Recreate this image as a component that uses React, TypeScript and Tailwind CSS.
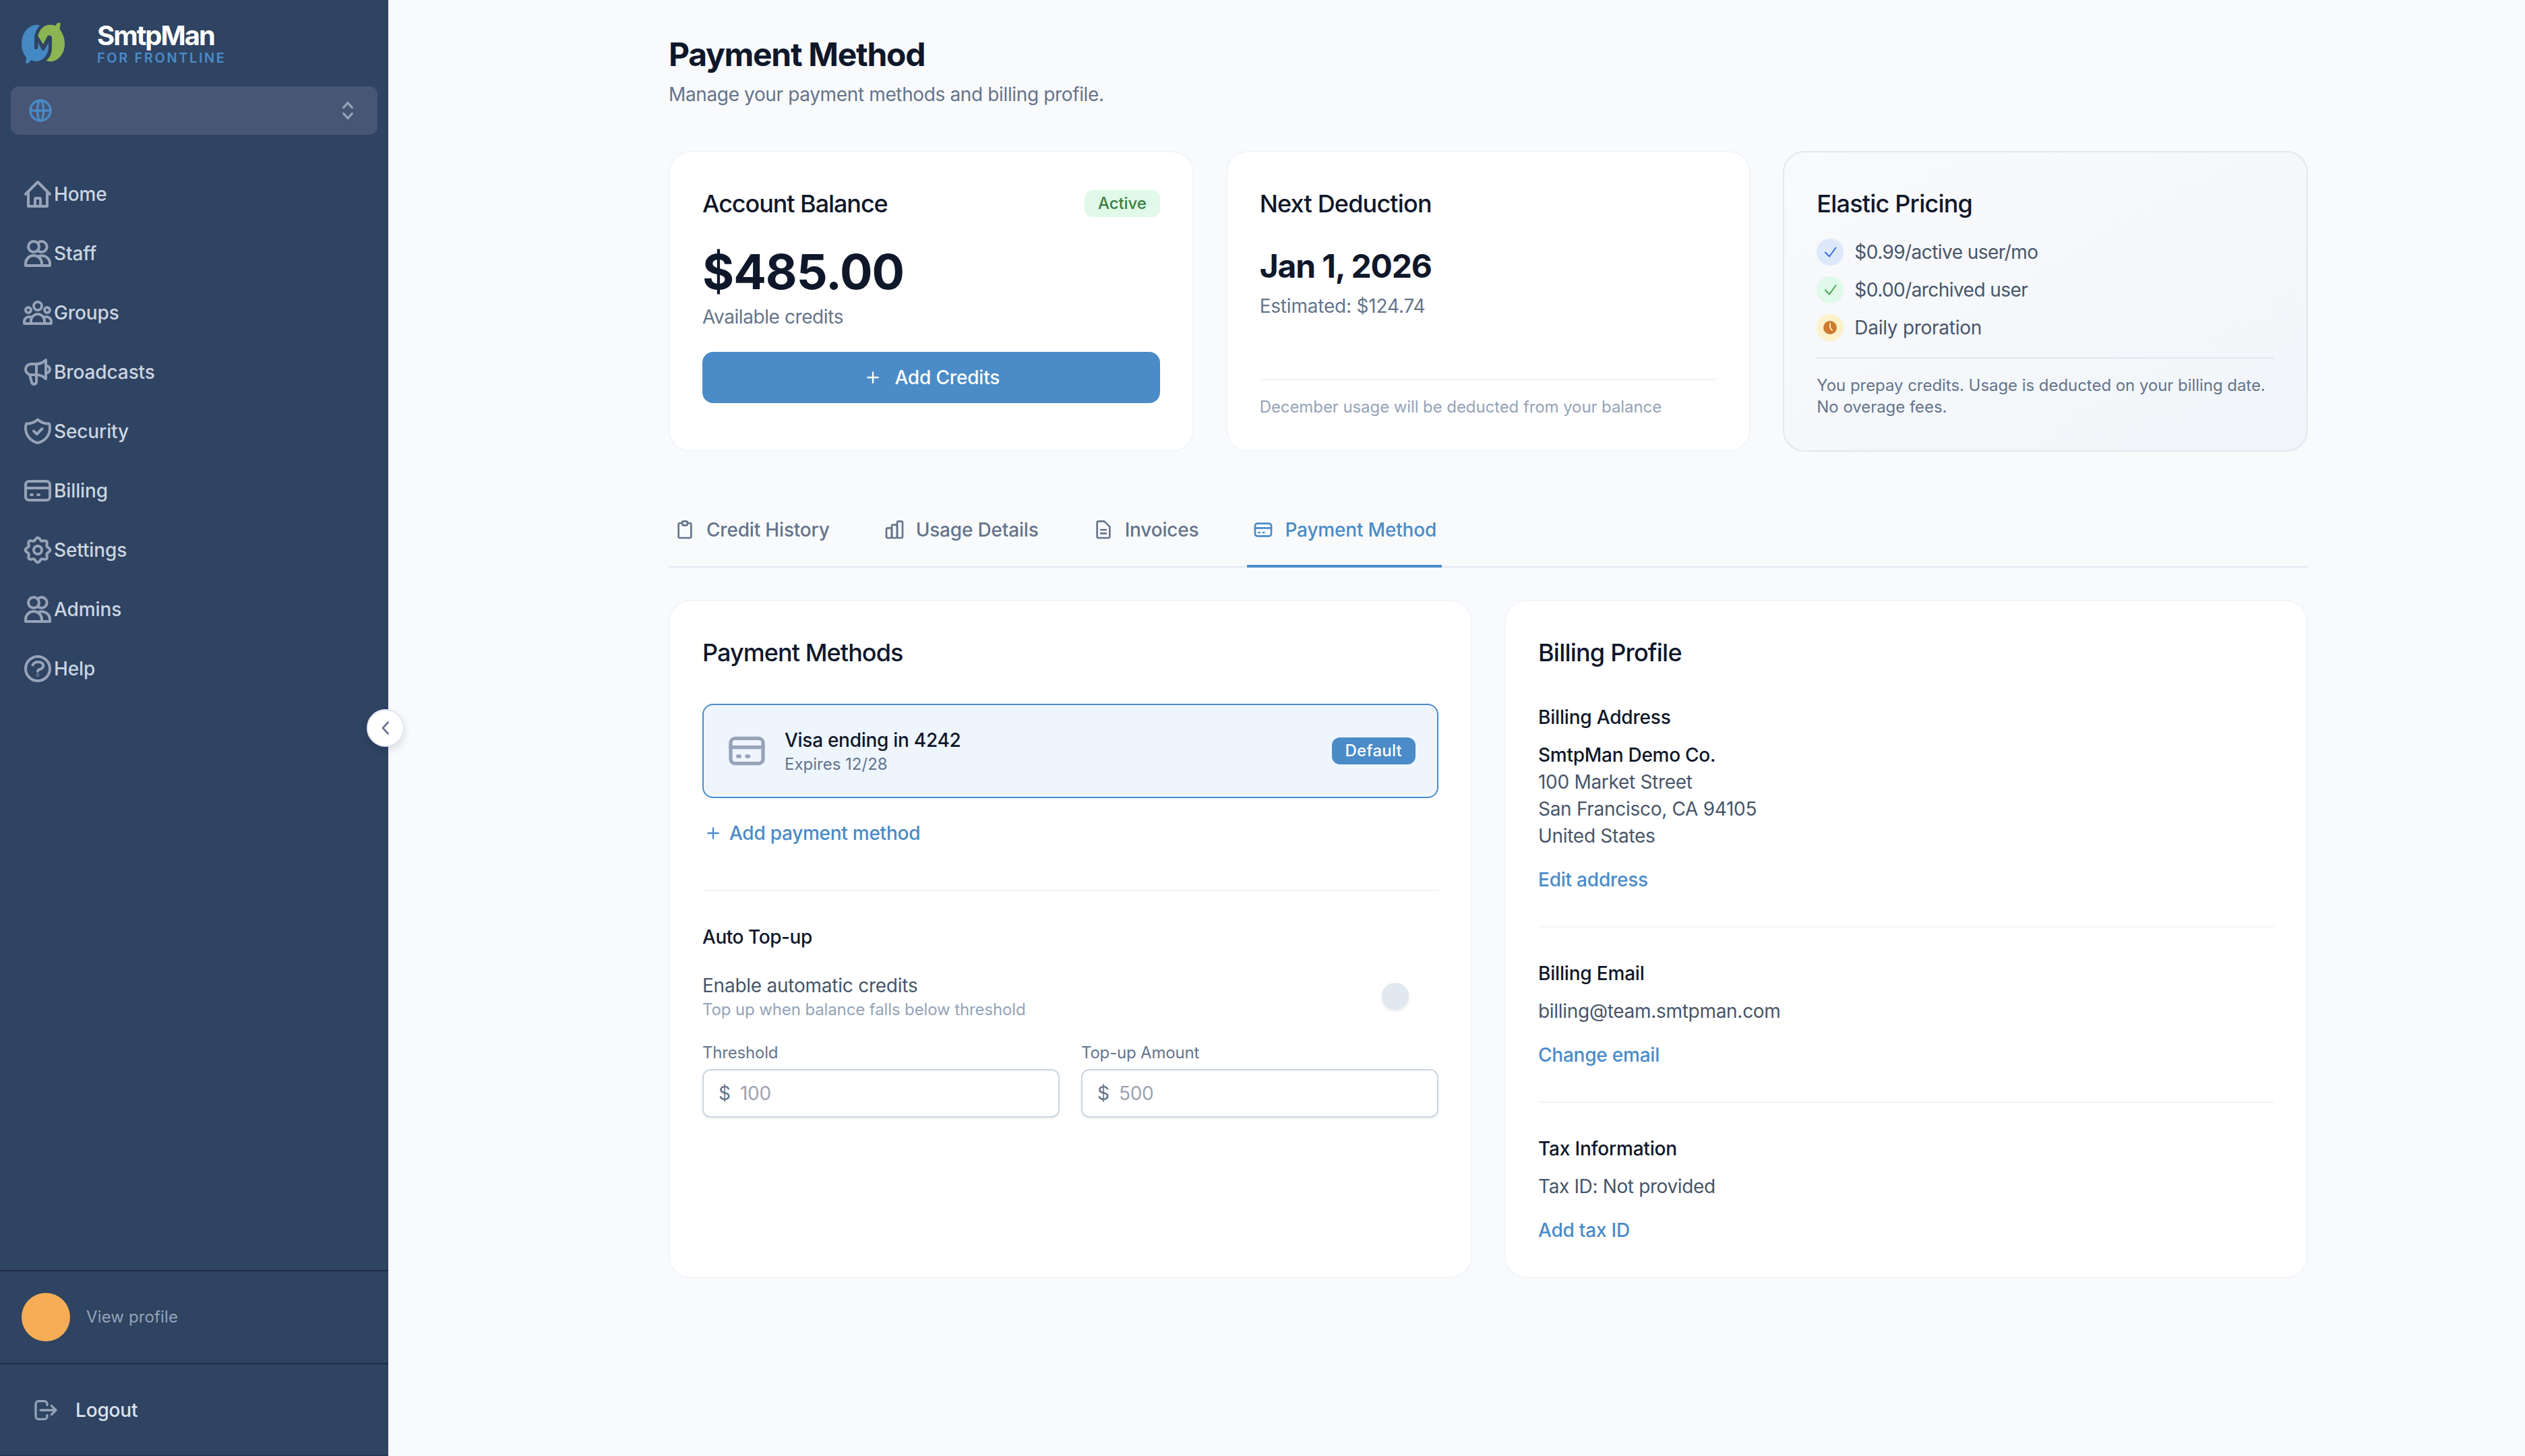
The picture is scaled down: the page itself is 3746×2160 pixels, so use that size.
import { useState } from "react"
import type { ReactNode } from "react"

interface IconProps {
  className?: string
  stroke?: number
  children?: ReactNode
}

// Shared icon frame, 40 unit drawing with a 4 unit margin
function Icon({ className = "size-12", stroke = 4, children }: IconProps) {
  return (
    <svg
      viewBox="-4 -4 48 48"
      fill="none"
      stroke="currentColor"
      strokeWidth={stroke}
      strokeLinecap="round"
      strokeLinejoin="round"
      className={`shrink-0 ${className}`}
    >
      {children}
    </svg>
  )
}

// Eight soft teeth around the center
const gearPath =
  Array.from({ length: 96 }, (_, i) => {
    const a = (i / 96) * Math.PI * 2
    const r = 16.4 + 1.9 * Math.cos(8 * a)
    const x = 20 + r * Math.sin(a)
    const y = 20 - r * Math.cos(a)
    return `${i === 0 ? "M" : "L"}${x.toFixed(2)} ${y.toFixed(2)}`
  }).join("") + "Z"

const HomeIcon = () => (
  <Icon>
    <path d="M2 20L20 2l18 18" />
    <path d="M6 17v21h28V17" />
    <path d="M16 38V27.5a1.5 1.5 0 0 1 1.5-1.5h5a1.5 1.5 0 0 1 1.5 1.5V38" />
  </Icon>
)

const UsersIcon = () => (
  <Icon>
    <circle cx="14" cy="10" r="8" />
    <path d="M20 4.3A8 8 0 1 1 20 15.7" />
    <path d="M2 38v-3a12 12 0 0 1 24 0v3z" />
    <path d="M22 23.9A12 12 0 0 1 38 35v3H26" />
  </Icon>
)

const GroupsIcon = () => (
  <Icon className="size-12 overflow-visible">
    <circle cx="20" cy="10" r="6" />
    <circle cx="6" cy="16" r="4" />
    <circle cx="34" cy="16" r="4" />
    <path d="M10 36v-4a10 10 0 0 1 20 0v4" />
    <path d="M11 27c-1.2-.7-2.5-1-4-1a7 7 0 0 0-7 7v3h40v-3a7 7 0 0 0-7-7c-1.5 0-2.8.3-4 1" />
  </Icon>
)

const MegaphoneIcon = () => (
  <Icon>
    <path d="M10 8a8 8 0 0 0 0 16h8c5 0 10 2 14 6V2c-4 4-9 6-14 6z" />
    <path d="M18 8v16" />
    <path d="M8 24l3 11c.5 2 2 3 3.6 3 2 0 3.4-1.6 3.4-3.4V24" />
    <path d="M33 10.5c3 .5 5 3 5 5.5s-2 5-5 5.5" />
  </Icon>
)

const ShieldIcon = () => (
  <Icon>
    <path d="M20 2.5C15 7 9 8.7 3 8.7c-.7 2-1 4.3-1 6.3 0 11 7.5 19.5 18 22 10.500-2.500 18-11 18-22 0-2-.3-4.300-1-6.300-6 0-12-1.700-17-6.200z" />
    <path d="M14 19.5l4.7 4.5 7.8-8" />
  </Icon>
)

const CardIcon = ({ className }: { className?: string }) => (
  <Icon className={className}>
    <rect x="2" y="6" width="36" height="28" rx="5" />
    <path d="M2 16h36M10 26h2M20 26h2" />
  </Icon>
)

const GearIcon = () => (
  <Icon>
    <path d={gearPath} />
    <circle cx="20" cy="20" r="6" />
  </Icon>
)

const HelpIcon = () => (
  <Icon>
    <circle cx="20" cy="20" r="18" />
    <path d="M12.5 14.5C14 11.5 17 10 20.5 10c4.5 0 7.7 2 7.7 5.5 0 4-3.2 4.8-5.7 5.7-1.7.7-2.5 1.3-2.5 2.8" />
    <circle cx="20" cy="29.7" r="0.4" />
  </Icon>
)

const ClipboardIcon = () => (
  <Icon className="size-8">
    <path d="M14 5H9a3 3 0 0 0-3 3v27a3 3 0 0 0 3 3h22a3 3 0 0 0 3-3V8a3 3 0 0 0-3-3h-5" />
    <path d="M14 3.5A2.5 2.5 0 0 1 16.5 1h7A2.5 2.5 0 0 1 26 3.5V6a4 4 0 0 1-4 4h-4a4 4 0 0 1-4-4z" />
  </Icon>
)

const BarsIcon = () => (
  <Icon className="size-8">
    <rect x="2" y="16" width="12" height="22" rx="3" />
    <rect x="14" y="9" width="12" height="29" rx="3" />
    <rect x="26" y="1" width="12" height="37" rx="3" />
  </Icon>
)

const DocumentIcon = () => (
  <Icon className="size-8">
    <path d="M22 1H9a3 3 0 0 0-3 3v31a3 3 0 0 0 3 3h22a3 3 0 0 0 3-3V13z" />
    <path d="M14 20h12M14 28h12" />
  </Icon>
)

const PlusIcon = () => (
  <Icon className="size-8" stroke={3.5}>
    <path d="M20 8.5v23M8.5 20h23" />
  </Icon>
)

const CheckIcon = () => (
  <Icon className="size-6" stroke={3.6}>
    <path d="M6 21l12 12L37 7" />
  </Icon>
)

const Logo = () => (
  <svg viewBox="36 36 192 192" className="size-16 shrink-0 overflow-visible">
    <path
      fill="#4489c4"
      d="M118 54C108 49 96 50 84 54 54 66 36 98 36 135c0 22 7 44 21 59 1 7-1 14-3 20 0 6 5 10 12 8l13-15c10 6 24 7 37 4 24-9 40-35 40-63v-18l-18 32q-6 6-12 0l-17-34v24q-1 8-8 8-8-1-8-9v-40c1-23 10-43 25-57z"
    />
    <path
      fill="#8ab552"
      d="M109 100c6-25 22-49 52-50 10 0 18 1 26 5l6-10q7-6 15-3 3 6-1 15l-1 14c15 18 22 40 22 64 0 45-30 78-63 79q-14 0-19-4c18-15 25-35 25-60v-40q-1-12-11-13-7 0-10 6l-18 34z"
    />
  </svg>
)

const navItems = [
  { label: "Home", icon: <HomeIcon /> },
  { label: "Staff", icon: <UsersIcon /> },
  { label: "Groups", icon: <GroupsIcon /> },
  { label: "Broadcasts", icon: <MegaphoneIcon /> },
  { label: "Security", icon: <ShieldIcon /> },
  { label: "Billing", icon: <CardIcon /> },
  { label: "Settings", icon: <GearIcon /> },
  { label: "Admins", icon: <UsersIcon /> },
  { label: "Help", icon: <HelpIcon /> },
]

const tabs = [
  { label: "Credit History", icon: <ClipboardIcon /> },
  { label: "Usage Details", icon: <BarsIcon /> },
  { label: "Invoices", icon: <DocumentIcon /> },
  { label: "Payment Method", icon: <CardIcon className="size-8" /> },
]

function Sidebar() {
  return (
    <aside className="relative flex h-full w-[576px] shrink-0 flex-col bg-[#2f4362] shadow-[inset_0_-1px_0_#22324b]">
      {/* Brand */}
      <div className="flex h-32 gap-12 pl-8">
        <div className="pt-8">
          <Logo />
        </div>
        <div className="pt-7">
          <div className="text-[40px] leading-[50px] font-bold tracking-[-0.05em] text-white">
            SmtpMan
          </div>
          <div className="text-[20px] leading-4 font-semibold tracking-[0.129em] text-[#4a8bc8]">
            FOR FRONTLINE
          </div>
        </div>
      </div>

      {/* Workspace select */}
      <button className="mx-4 flex h-[72px] items-center justify-between rounded-xl bg-[#475674] px-6">
        <Icon className="size-10 text-[#4a8bc8]">
          <circle cx="20" cy="20" r="18" />
          <ellipse cx="20" cy="20" rx="5.5" ry="18" />
          <path d="M2 20h36" />
        </Icon>
        <Icon className="size-10 text-[#94a3b8]">
          <path d="M12.5 14.5l7.5-8.3 7.5 8.3M12.5 25.5l7.5 8.3 7.5-8.3" />
        </Icon>
      </button>

      <nav className="mt-12 flex flex-1 flex-col gap-2">
        {navItems.map((item) => (
          <a
            key={item.label}
            className="flex h-20 items-center pl-8 text-[28px] font-medium tracking-[-0.004em] text-[#cbd5e1]"
          >
            <span className="text-[#97a3b8]">{item.icon}</span>
            {item.label}
          </a>
        ))}
      </nav>

      <div className="flex h-[138px] items-center gap-6 border-t-2 border-[#1f2d44] pl-8">
        <div className="size-[72px] rounded-full bg-[#f6ad55]" />
        <span className="text-[24px] tracking-[0.0055em] text-[#94a3b8]">
          View profile
        </span>
      </div>
      <div className="flex h-[138px] items-center gap-6 border-t-2 border-[#1f2d44] pl-12">
        <Icon className="size-10 text-[#94a3b8]">
          <path d="M22.4 11V9a5 5 0 0 0-5-5H7a5 5 0 0 0-5 5v22a5 5 0 0 0 5 5h10.4a5 5 0 0 0 5-5v-2" />
          <path d="M10.5 20H38M30 12l8 8-8 8" />
        </Icon>
        <span className="text-[28px] font-medium tracking-[-0.006em] text-[#dbe3ed]">
          Logout
        </span>
      </div>

      {/* Collapse handle */}
      <button className="absolute top-[1052px] -right-6 z-10 flex size-14 items-center justify-center rounded-full border-2 border-[#e2e8f0] bg-white text-[#64748b] shadow-[0_6px_12px_rgba(15,23,42,0.12)]">
        <Icon className="size-8">
          <path d="M25.5 7.5L14 20l11.5 12.5" />
        </Icon>
      </button>
    </aside>
  )
}

interface CardProps {
  title: string
  titleClass?: string
  className?: string
  badge?: ReactNode
  children: ReactNode
}

function Card({
  title,
  titleClass = "tracking-[-0.022em]",
  className = "border-[#f1f5f9] bg-white",
  badge,
  children,
}: CardProps) {
  return (
    <section className={`flex flex-col rounded-[32px] border-2 p-12 ${className}`}>
      <div className="flex items-center justify-between">
        <h2 className={`text-[36px] leading-[56px] font-medium text-[#0f172a] ${titleClass}`}>
          {title}
        </h2>
        {badge}
      </div>
      {children}
    </section>
  )
}

interface PriceRowProps {
  className: string
  icon: ReactNode
  children: ReactNode
}

function PriceRow({ className, icon, children }: PriceRowProps) {
  return (
    <li className="flex items-center gap-4">
      <span className={`flex size-10 items-center justify-center rounded-full ${className}`}>
        {icon}
      </span>
      {children}
    </li>
  )
}

function SummaryCards() {
  return (
    <div className="mt-16 grid h-[446px] grid-cols-3 gap-12">
      <Card
        title="Account Balance"
        titleClass="tracking-[-0.030em]"
        badge={
          <span className="flex h-10 items-center rounded-xl bg-[#e1f9e8] px-5 text-[24px] font-medium tracking-[-0.005em] text-[#38803f]">
            Active
          </span>
        }
      >
        <p className="mt-8 text-[72px] leading-[82px] font-bold tracking-[-0.014em] text-[#0f172a]">
          $485.00
        </p>
        <p className="mt-1.5 text-[28px] leading-10 tracking-[-0.015em] text-[#64748b]">
          Available credits
        </p>
        <button className="mt-8 flex h-[76px] items-center justify-center gap-4 rounded-2xl bg-[#4a8bc8] text-[28px] font-medium tracking-[-0.006em] text-white">
          <PlusIcon />
          Add Credits
        </button>
      </Card>

      <Card title="Next Deduction" titleClass="tracking-[-0.023em]">
        <p className="mt-8 text-[48px] leading-[65px] font-bold tracking-[-0.024em] text-[#0f172a]">
          Jan 1, 2026
        </p>
        <p className="mt-[7px] text-[28px] leading-10 tracking-[-0.007em] text-[#64748b]">
          Estimated: $124.74
        </p>
        <p className="mt-auto border-t-2 border-[#f1f5f9] pt-6 text-[24px] leading-8 tracking-[-0.0035em] text-[#94a3b8]">
          December usage will be deducted from your balance
        </p>
      </Card>

      <Card
        title="Elastic Pricing"
        className="border-[#e2e8f0] bg-linear-to-br from-[#f9fafc] to-[#f1f5f9]"
      >
        <ul className="mt-6 flex flex-col gap-4 text-[28px] leading-10 tracking-[-0.02em] text-[#475569]">
          <PriceRow className="bg-[#dde9fb] text-[#2f62e8]" icon={<CheckIcon />}>
            $0.99/active user/mo
          </PriceRow>
          <PriceRow className="bg-[#e1f9e8] text-[#38a14b]" icon={<CheckIcon />}>
            $0.00/archived user
          </PriceRow>
          <PriceRow
            className="bg-[#fdf1cb] text-[#cd7a2d]"
            icon={
              <svg viewBox="0 0 20 20" fill="none" className="size-5">
                <circle cx="10" cy="10" r="10" fill="currentColor" />
                <path d="M10 4v6.3l3 3.7" stroke="#fdf1cb" strokeWidth="1.8" strokeLinecap="round" />
              </svg>
            }
          >
            <span className="tracking-[-0.01em]">Daily proration</span>
          </PriceRow>
        </ul>
        <p className="mt-6 border-t-2 border-[#e2e8f0] pt-6 text-[24px] leading-8 tracking-[-0.002em] text-[#64748b]">
          You prepay credits. Usage is deducted on your billing date.
          <br />
          No overage fees.
        </p>
      </Card>
    </div>
  )
}

interface AmountInputProps {
  label: string
  placeholder: string
}

function AmountInput({ label, placeholder }: AmountInputProps) {
  return (
    <label className="flex flex-col gap-2">
      <span className="text-[24px] leading-8 tracking-[-0.008em] text-[#64748b]">
        {label}
      </span>
      <span className="flex h-[72px] items-center gap-3.5 rounded-xl border-2 border-[#cbd5e1] bg-white pl-[22px] text-[28px] text-[#64748b] shadow-[0_2px_4px_rgba(0,0,0,0.05)]">
        $
        <input
          className="w-40 tracking-[-0.01em] outline-none placeholder:text-[#9ca3af]"
          placeholder={placeholder}
        />
      </span>
    </label>
  )
}

function PaymentMethods() {
  return (
    <Card title="Payment Methods" titleClass="tracking-[-0.026em]">
      <div className="mt-12 flex h-[140px] items-center rounded-2xl border-2 border-[#4a8bc8] bg-[#eef5fd] px-8">
        <CardIcon className="size-16 text-[#97a3b8]" />
        <div className="ml-6 flex-1">
          <p className="text-[28px] leading-10 font-medium tracking-[-0.01em] text-[#0f172a]">
            Visa ending in 4242
          </p>
          <p className="text-[24px] leading-8 text-[#64748b]">Expires 12/28</p>
        </div>
        <span className="flex h-10 items-center rounded-xl bg-[#4a8bc8] px-5 text-[24px] font-medium tracking-[0.01em] text-white">
          Default
        </span>
      </div>
      <button className="mt-8 flex h-10 items-center gap-2 text-[28px] font-medium tracking-[-0.0095em] text-[#4a8bc8]">
        <PlusIcon />
        Add payment method
      </button>

      <div className="mt-16 border-t-2 border-[#f1f5f9] pt-12">
        <h3 className="text-[28px] leading-10 font-medium tracking-[-0.0158em] text-[#0f172a]">
          Auto Top-up
        </h3>
        <div className="mt-8 flex items-center justify-between pr-11">
          <div>
            <p className="text-[28px] leading-10 tracking-[-0.0085em] text-[#475569]">
              Enable automatic credits
            </p>
            <p className="text-[24px] leading-8 tracking-[-0.005em] text-[#94a3b8]">
              Top up when balance falls below threshold
            </p>
          </div>
          <span className="size-10 rounded-full bg-[#e2e8f0] shadow-[0_2px_4px_rgba(0,0,0,0.1)]" />
        </div>
        <div className="mt-8 grid grid-cols-2 gap-8">
          <AmountInput label="Threshold" placeholder="100" />
          <AmountInput label="Top-up Amount" placeholder="500" />
        </div>
      </div>
    </Card>
  )
}

interface ProfileSectionProps {
  title: string
  action: string
  className: string
  children: ReactNode
}

function ProfileSection({ title, action, className, children }: ProfileSectionProps) {
  return (
    <div className={className}>
      <h3 className="text-[28px] leading-10 font-medium tracking-[-0.0067em] text-[#0f172a]">
        {title}
      </h3>
      <div className="mt-4 text-[28px] leading-10 tracking-[-0.0105em] text-[#475569]">
        {children}
      </div>
      <button className="mt-6 block h-[42px] text-left text-[28px] leading-10 font-medium tracking-[-0.008em] text-[#4a8bc8]">
        {action}
      </button>
    </div>
  )
}

function BillingProfile() {
  return (
    <Card title="Billing Profile">
      <ProfileSection title="Billing Address" action="Edit address" className="mt-12 pb-12">
        <p className="font-medium tracking-[-0.0093em] text-[#0f172a]">SmtpMan Demo Co.</p>
        <p>100 Market Street</p>
        <p>San Francisco, CA 94105</p>
        <p>United States</p>
      </ProfileSection>
      <ProfileSection
        title="Billing Email"
        action="Change email"
        className="border-y-2 border-[#f1f5f9] py-12"
      >
        <p>billing@team.smtpman.com</p>
      </ProfileSection>
      <ProfileSection title="Tax Information" action="Add tax ID" className="pt-12">
        <p className="tracking-[-0.013em]">Tax ID: Not provided</p>
      </ProfileSection>
    </Card>
  )
}

export default function App() {
  const [activeTab, setActiveTab] = useState("Payment Method")

  return (
    <div className="flex h-[2160px] w-full overflow-hidden bg-[#f9fafc] font-[Inter,sans-serif]">
      <Sidebar />

      <main className="flex-1 pt-12 pl-[416px]">
        <div className="w-[2432px]">
          <h1 className="text-[48px] leading-[65px] font-bold tracking-[-0.027em] text-[#0f172a]">
            Payment Method
          </h1>
          <p className="mt-[7px] text-[28px] leading-10 tracking-[-0.013em] text-[#64748b]">
            Manage your payment methods and billing profile.
          </p>

          <SummaryCards />

          {/* Tabs */}
          <div className="mt-16 flex gap-16 border-b-2 border-[#e2e8f0]">
            {tabs.map((tab) => (
              <button
                key={tab.label}
                onClick={() => setActiveTab(tab.label)}
                className={`-mb-0.5 flex items-center gap-4 border-b-4 px-2 py-8 text-[28px] leading-10 font-medium tracking-[-0.0065em] ${
                  activeTab === tab.label
                    ? "border-[#4a8bc8] text-[#4a8bc8]"
                    : "border-transparent text-[#64748b]"
                }`}
              >
                {tab.icon}
                {tab.label}
              </button>
            ))}
          </div>

          <div className="mt-12 grid grid-cols-2 gap-12">
            <PaymentMethods />
            <BillingProfile />
          </div>
        </div>
      </main>
    </div>
  )
}
